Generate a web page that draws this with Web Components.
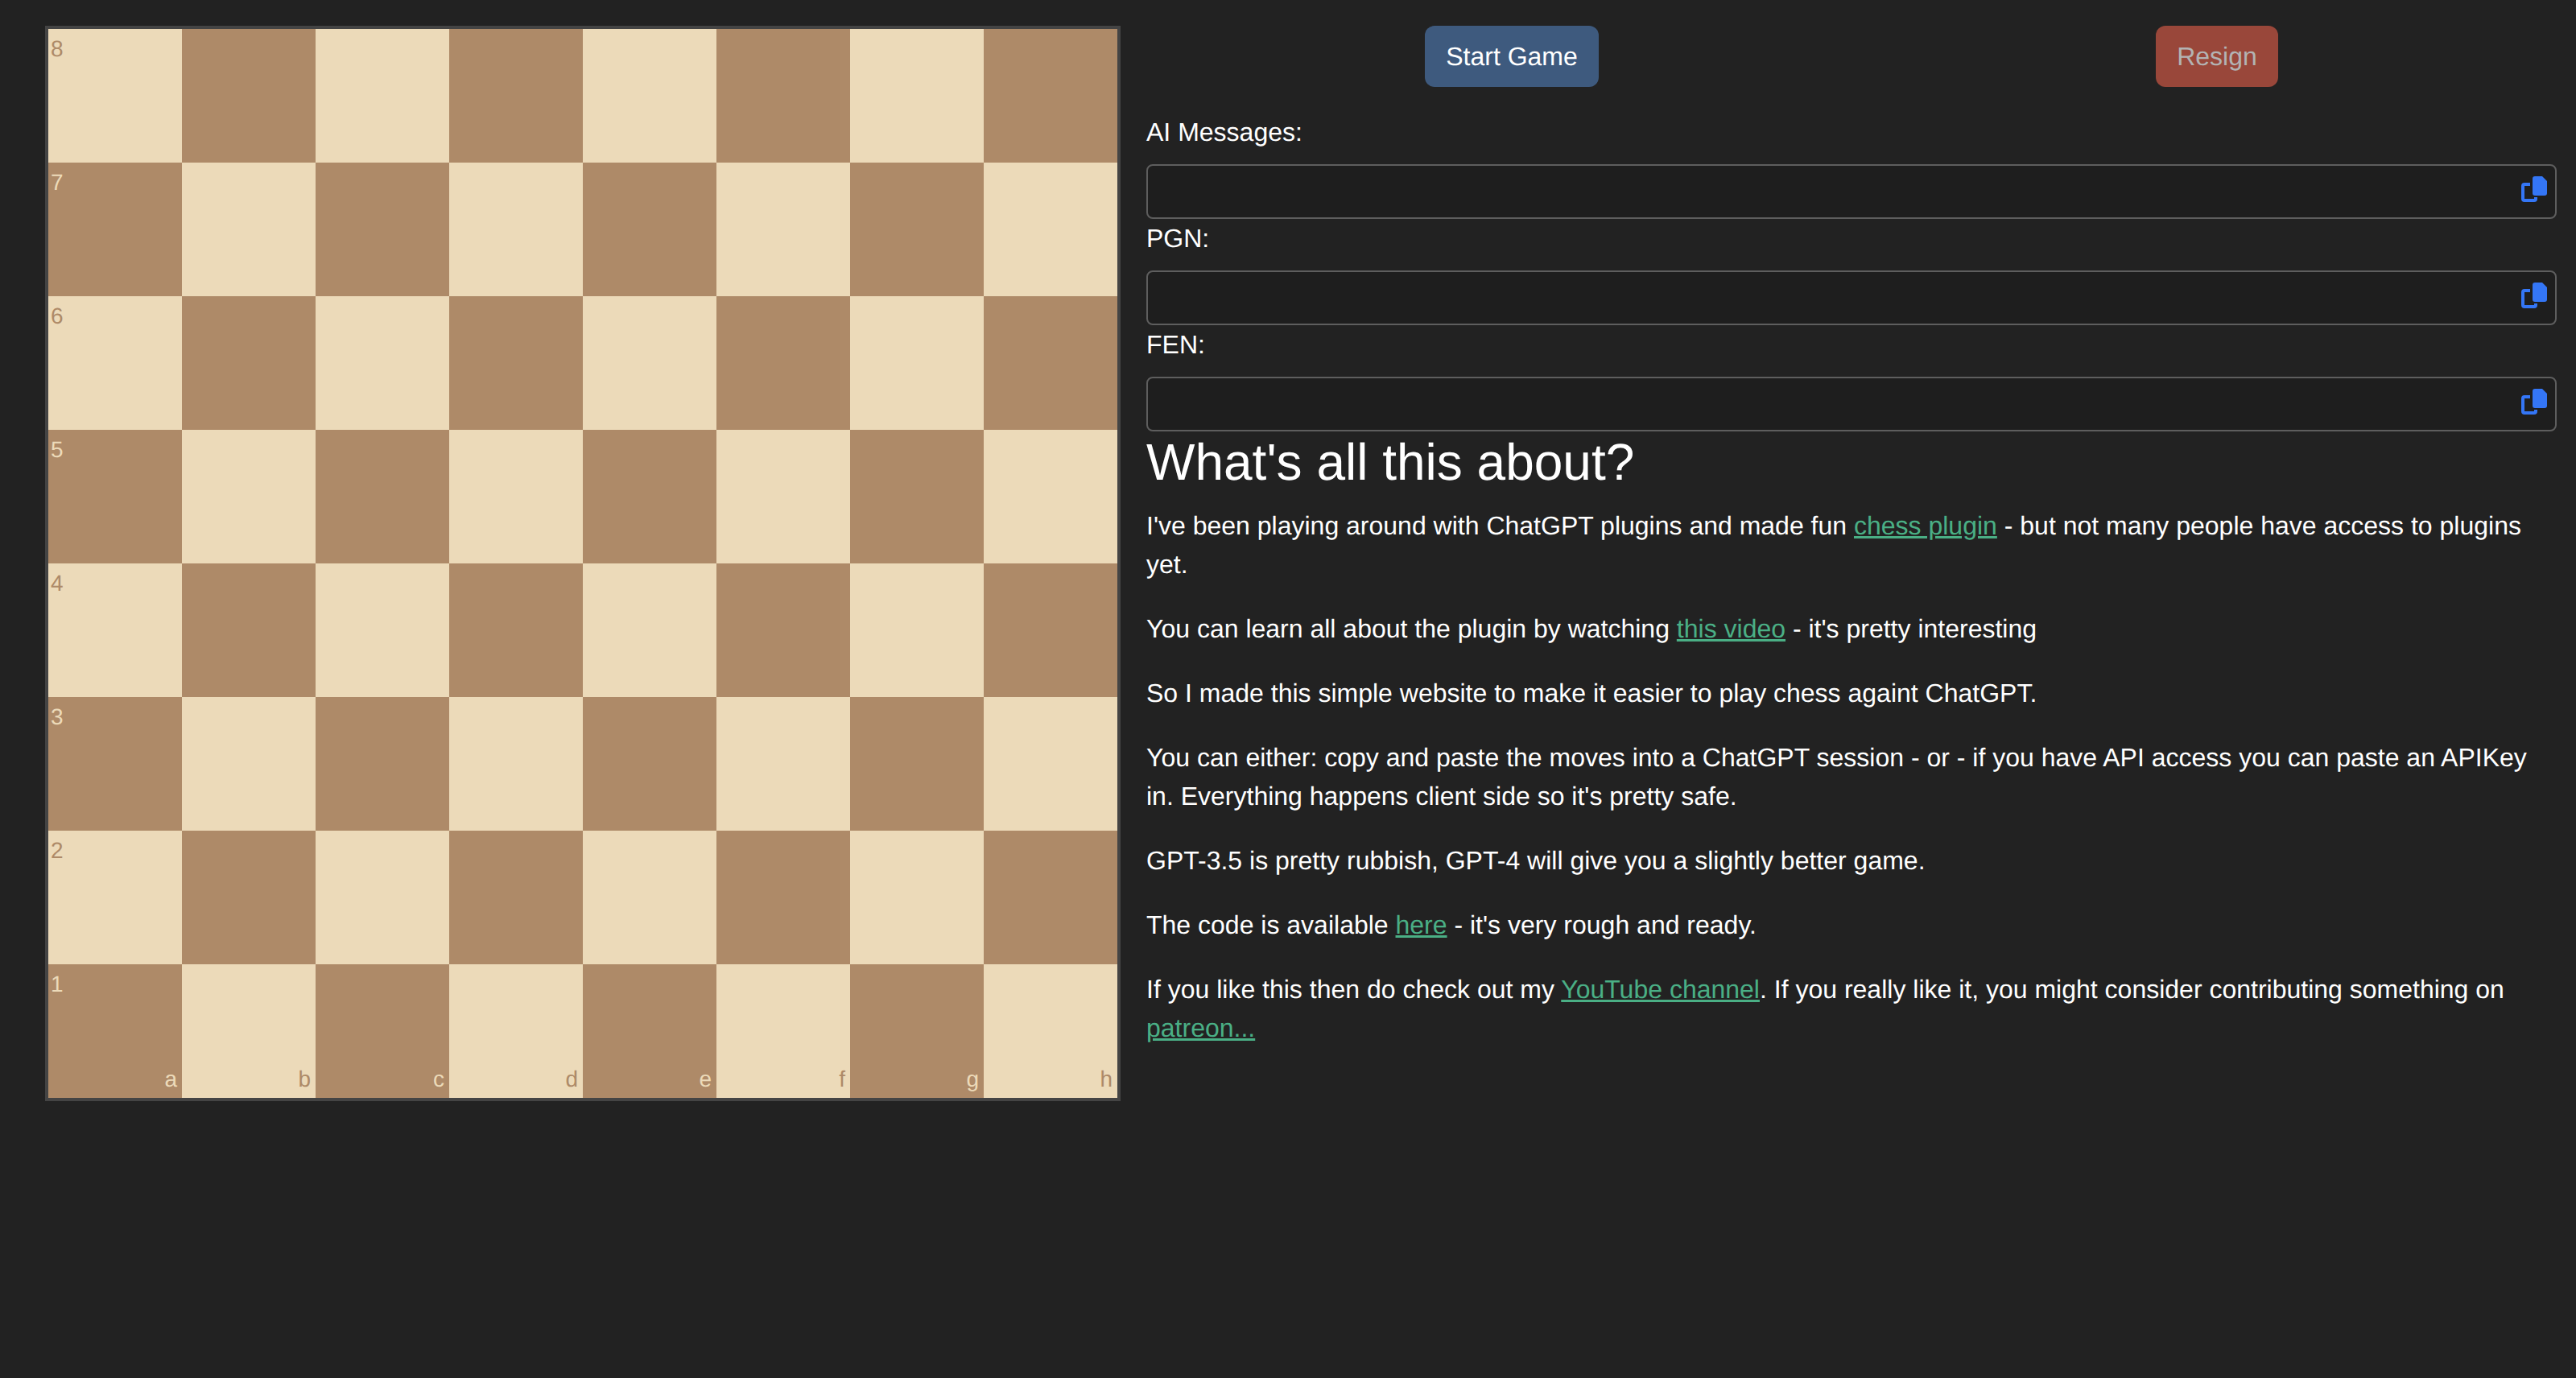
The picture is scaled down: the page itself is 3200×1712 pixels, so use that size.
<!DOCTYPE html>
<html lang="en">
<head>
<meta charset="utf-8">
<title>Chess GPT</title>
<style>
    html, body {
        margin: 0;
        background: #222222;
    }
    body {
        min-height: 1712px;
        color: #fff;
        font: 32px/48px "Liberation Sans", Arial, sans-serif;
        text-rendering: geometricPrecision;
    }
</style>
</head>
<body>
<chess-app>
    <chess-board slot="board"></chess-board>
    <game-controls></game-controls>
    <copy-field label="AI Messages:"></copy-field>
    <copy-field label="PGN:"></copy-field>
    <copy-field label="FEN:"></copy-field>
    <about-title>What's all this about?</about-title>
    <about-para>I've been playing around with ChatGPT plugins and made fun <a href="#">chess plugin</a> - but not many people have access to plugins yet.</about-para>
    <about-para>You can learn all about the plugin by watching <a href="#">this video</a> - it's pretty interesting</about-para>
    <about-para>So I made this simple website to make it easier to play chess againt ChatGPT.</about-para>
    <about-para>You can either: copy and paste the moves into a ChatGPT session - or - if you have API access you can paste an APIKey in. Everything happens client side so it's pretty safe.</about-para>
    <about-para>GPT-3.5 is pretty rubbish, GPT-4 will give you a slightly better game.</about-para>
    <about-para>The code is available <a href="#">here</a> - it's very rough and ready.</about-para>
    <about-para>If you like this then do check out my <a href="#">YouTube channel</a>. If you really like it, you might consider contributing something on <a href="#">patreon...</a></about-para>
</chess-app>

<script>
const appTemplate = document.createElement('template');
appTemplate.innerHTML = `
    <style>
        :host{
            display: grid;
            grid-template-columns: 1336px 1fr;
            column-gap: 32px;
            padding: 32px 24px 0 56px;
            align-items: start;
        }
        .side{
            display: flex;
            flex-direction: column;
            min-width: 0;
        }
    </style>
    <slot name="board"></slot>
    <div class="side"><slot></slot></div>
`;

class ChessApp extends HTMLElement {
    constructor() {
        super();
        this.attachShadow({ mode: 'open' });
        this.shadowRoot.appendChild(appTemplate.content.cloneNode(true));
    }
}

const boardTemplate = document.createElement('template');
boardTemplate.innerHTML = `
    <style>
        :host{
            display: block;
            box-sizing: border-box;
            width: 1336px;
            border: 4px solid #444444;
        }
        .grid{
            display: grid;
            grid-template-columns: repeat(8, 166px);
            grid-auto-rows: 166px;
        }
        .cell{
            position: relative;
            font-size: 28px;
            line-height: 32px;
        }
        .light{ background: #ecdab9; color: #ae8a68; }
        .dark{ background: #ae8a68; color: #ecdab9; }
        .rank{ position: absolute; top: 9px; left: 3px; }
        .file{ position: absolute; bottom: 7px; right: 6px; }
    </style>
    <div class="grid"></div>
`;

class ChessBoard extends HTMLElement {
    constructor() {
        super();
        this.attachShadow({ mode: 'open' });
        this.shadowRoot.appendChild(boardTemplate.content.cloneNode(true));
    }

    connectedCallback() {
        const grid = this.shadowRoot.querySelector('.grid');
        const files = 'abcdefgh';
        for (let row = 0; row < 8; row++) {
            for (let col = 0; col < 8; col++) {
                const cell = document.createElement('div');
                cell.className = 'cell ' + ((row + col) % 2 ? 'dark' : 'light');
                if (col === 0) {
                    const rank = document.createElement('span');
                    rank.className = 'rank';
                    rank.textContent = 8 - row;
                    cell.appendChild(rank);
                }
                if (row === 7) {
                    const file = document.createElement('span');
                    file.className = 'file';
                    file.textContent = files[col];
                    cell.appendChild(file);
                }
                grid.appendChild(cell);
            }
        }
    }
}

const controlsTemplate = document.createElement('template');
controlsTemplate.innerHTML = `
    <style>
        :host{
            display: flex;
            justify-content: space-around;
            margin-bottom: 32px;
        }
        button{
            box-sizing: border-box;
            height: 76px;
            padding: 0 26px;
            border: 0;
            border-radius: 12px;
            font: inherit;
            text-rendering: inherit;
        }
        .start{ background: #3e5a7e; color: #fff; }
        .resign{ background: #99473a; color: #b3b3b3; }
    </style>
    <button class="start">Start Game</button>
    <button class="resign" disabled>Resign</button>
`;

class GameControls extends HTMLElement {
    constructor() {
        super();
        this.attachShadow({ mode: 'open' });
        this.shadowRoot.appendChild(controlsTemplate.content.cloneNode(true));
    }
}

const fieldTemplate = document.createElement('template');
fieldTemplate.innerHTML = `
    <style>
        :host{
            display: block;
        }
        label{
            display: block;
            margin-bottom: 16px;
        }
        .box{
            position: relative;
            box-sizing: border-box;
            height: 68px;
            background: #1e1e1e;
            border: 2px solid #5e5e5e;
            border-radius: 8px;
        }
        svg{
            position: absolute;
            top: 13px;
            right: 10px;
            width: 32px;
            height: 32px;
        }
    </style>
    <label></label>
    <div class="box">
        <svg viewBox="0 0 32 32" aria-hidden="true">
            <path d="M11 10H4a2 2 0 0 0-2 2v16a2 2 0 0 0 2 2h12a2 2 0 0 0 2-2v-2" fill="none" stroke="#3476f6" stroke-width="4"/>
            <path d="M17 0h9l6 6v15a3 3 0 0 1-3 3H17a3 3 0 0 1-3-3V3a3 3 0 0 1 3-3z" fill="#3476f6"/>
        </svg>
    </div>
`;

class CopyField extends HTMLElement {
    constructor() {
        super();
        this.attachShadow({ mode: 'open' });
        this.shadowRoot.appendChild(fieldTemplate.content.cloneNode(true));
    }

    connectedCallback() {
        this.shadowRoot.querySelector('label').textContent = this.getAttribute('label');
    }
}

const titleTemplate = document.createElement('template');
titleTemplate.innerHTML = `
    <style>
        :host{
            display: block;
            padding-top: 2px;
            margin-bottom: 19px;
            font-size: 64px;
            line-height: 72px;
        }
    </style>
    <slot></slot>
`;

class AboutTitle extends HTMLElement {
    constructor() {
        super();
        this.attachShadow({ mode: 'open' });
        this.shadowRoot.appendChild(titleTemplate.content.cloneNode(true));
    }
}

const paraTemplate = document.createElement('template');
paraTemplate.innerHTML = `
    <style>
        :host{
            display: block;
            margin-bottom: 32px;
        }
        ::slotted(a){
            color: #4aaf85;
            text-decoration: underline;
        }
    </style>
    <slot></slot>
`;

class AboutPara extends HTMLElement {
    constructor() {
        super();
        this.attachShadow({ mode: 'open' });
        this.shadowRoot.appendChild(paraTemplate.content.cloneNode(true));
    }
}

customElements.define('chess-app', ChessApp);
customElements.define('chess-board', ChessBoard);
customElements.define('game-controls', GameControls);
customElements.define('copy-field', CopyField);
customElements.define('about-title', AboutTitle);
customElements.define('about-para', AboutPara);
</script>
</body>
</html>
